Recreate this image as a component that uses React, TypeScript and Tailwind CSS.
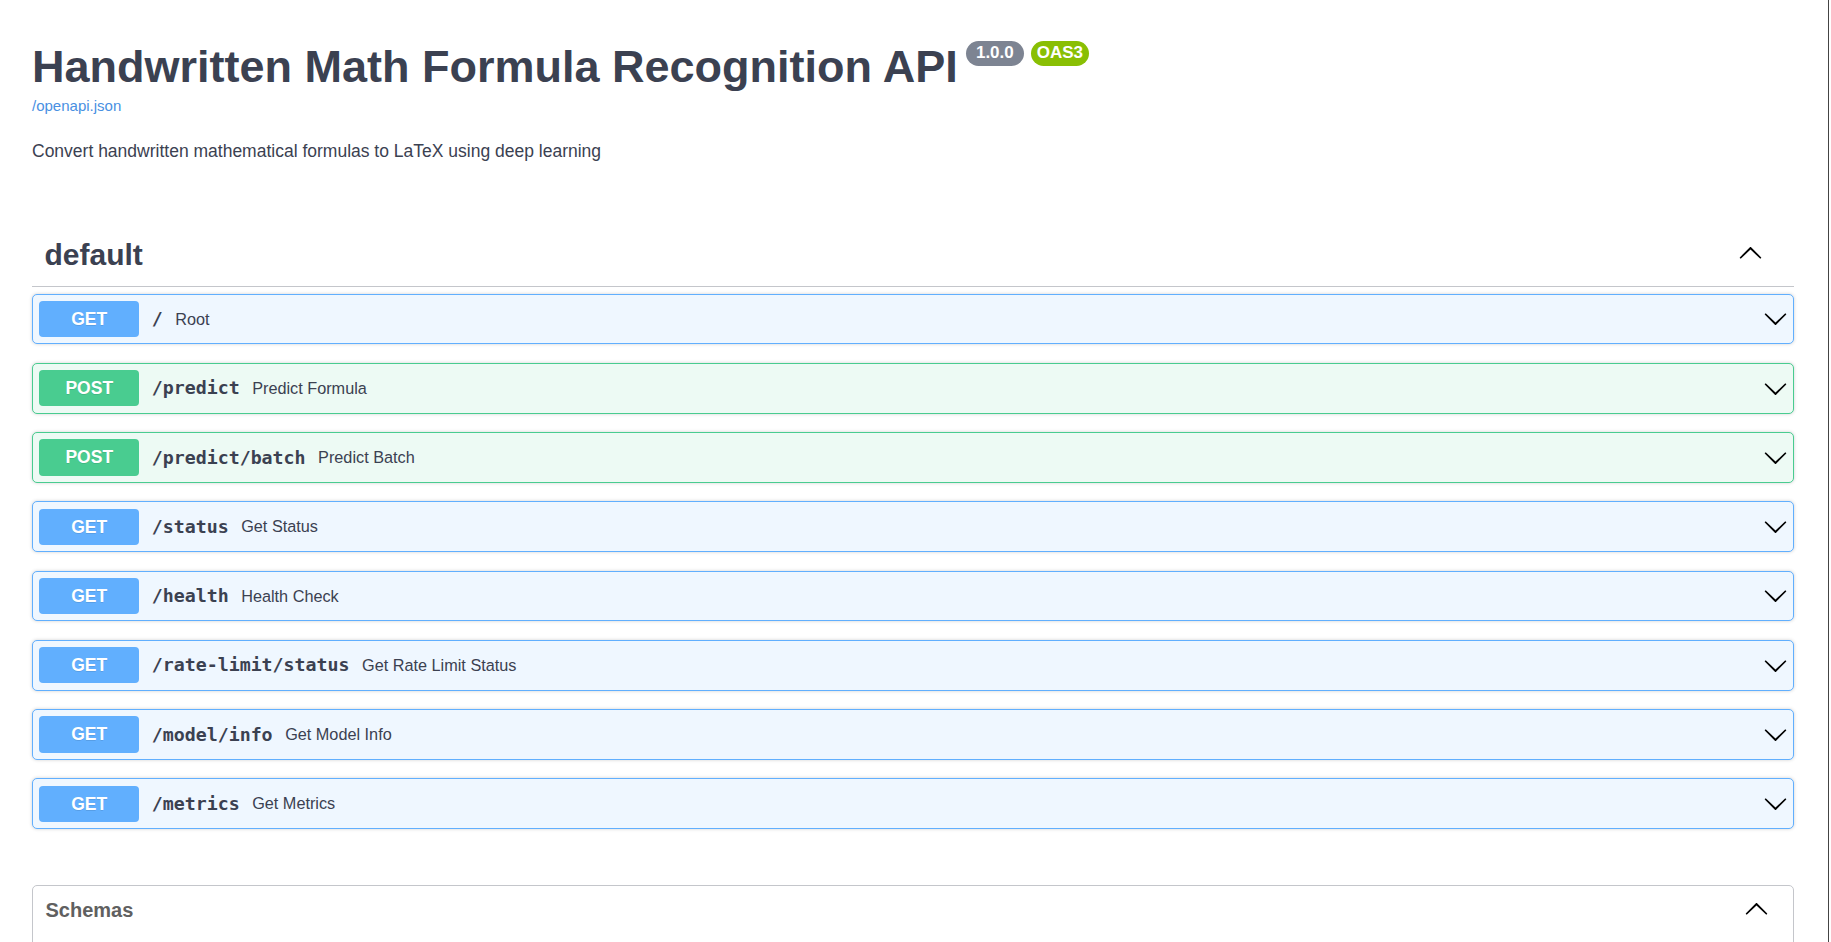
import React from "react";

type Operation = {
  method: "GET" | "POST";
  path: string;
  summary: string;
};

const operations: Operation[] = [
  { method: "GET", path: "/", summary: "Root" },
  { method: "POST", path: "/predict", summary: "Predict Formula" },
  { method: "POST", path: "/predict/batch", summary: "Predict Batch" },
  { method: "GET", path: "/status", summary: "Get Status" },
  { method: "GET", path: "/health", summary: "Health Check" },
  { method: "GET", path: "/rate-limit/status", summary: "Get Rate Limit Status" },
  { method: "GET", path: "/model/info", summary: "Get Model Info" },
  { method: "GET", path: "/metrics", summary: "Get Metrics" },
];

const sans = { fontFamily: '"Liberation Sans", Arial, sans-serif' };
const mono = { fontFamily: '"DejaVu Sans Mono", "Liberation Mono", monospace' };

function Arrow({ up = false, className = "" }: { up?: boolean; className?: string }) {
  return (
    <svg
      viewBox="0 0 20 20"
      className={`h-[25px] w-[25px] shrink-0 fill-black ${up ? "rotate-180" : ""} ${className}`}
    >
      <path d="M17.418 6.109c.272-.268.709-.268.979 0s.271.701 0 .969l-7.908 7.83c-.27.268-.707.268-.979 0l-7.908-7.83c-.27-.268-.27-.701 0-.969.271-.268.709-.268.979 0L10 13.25l7.418-7.141z" />
    </svg>
  );
}

function OperationRow({ op }: { op: Operation }) {
  const isGet = op.method === "GET";
  return (
    <div
      className={`flex h-[50.75px] items-center rounded-[5px] border py-[6.25px] pl-[6.25px] pr-[5px] shadow-[0_0_3.75px_rgba(0,0,0,0.19)] ${
        isGet ? "border-[#61affe] bg-[#eff7ff]" : "border-[#49cc90] bg-[#edfaf4]"
      }`}
    >
      <div
        className={`flex h-[36.25px] w-[100px] shrink-0 items-center justify-center rounded-[4px] text-[17.5px] font-bold text-white [text-shadow:0_1px_0_rgba(0,0,0,0.1)] ${
          isGet ? "bg-[#61affe]" : "bg-[#49cc90]"
        }`}
        style={sans}
      >
        {op.method}
      </div>
      <span className="px-[12.5px] text-[18.25px] font-bold text-[#3b4151]" style={mono}>
        {op.path}
      </span>
      <span className="flex-1 text-[16.25px] text-[#3b4151]" style={sans}>
        {op.summary}
      </span>
      <Arrow />
    </div>
  );
}

export default function App() {
  return (
    <div className="h-[942px] w-[1831px] overflow-hidden bg-white" style={sans}>
      <div className="h-full w-[1829px] border-r border-[#444]">
        <div className="ml-[32px] w-[1762px] pt-[41px]">
          <div className="flex items-start">
            <h1 className="text-[45px] font-bold leading-[52px] text-[#3b4151]">
              Handwritten Math Formula Recognition API
            </h1>
            <span className="ml-[8px] flex h-[25px] w-[58px] items-center justify-center rounded-full bg-[#7d8492] pb-[2px] text-[17px] font-bold text-white">
              1.0.0
            </span>
            <span className="ml-[7px] flex h-[25px] w-[58px] items-center justify-center rounded-full bg-[#89bf04] pb-[2px] text-[17px] font-bold text-white">
              OAS3
            </span>
          </div>
          <a className="mt-[4px] block text-[15px] leading-[18px] text-[#4990e2]">/openapi.json</a>
          <p className="mt-[26px] text-[17.5px] leading-[20px] text-[#3b4151]">
            Convert handwritten mathematical formulas to LaTeX using deep learning
          </p>

          <div className="mt-[64px] flex h-[62px] items-center border-b border-[#c4c6cb] pl-[12.5px] pr-[31px]">
            <h3 className="mb-[2px] flex-1 text-[30px] font-bold leading-[36px] text-[#3b4151]">default</h3>
            <Arrow up className="mb-[4px]" />
          </div>

          <div className="mt-[6.5px] flex flex-col gap-[18.5px]">
            {operations.map((op) => (
              <OperationRow key={op.method + op.path} op={op} />
            ))}
          </div>

          <div className="mt-[56px] h-[120px] rounded-[5px] border border-[#c4c6cb]">
            <div className="flex items-center pb-[12.5px] pl-[12.5px] pr-[24px] pt-[10.5px]">
              <h4 className="flex-1 text-[20px] font-bold leading-[22px] text-[#606060]">Schemas</h4>
              <Arrow up className="mb-[2px]" />
            </div>
          </div>
        </div>
      </div>
    </div>
  );
}
